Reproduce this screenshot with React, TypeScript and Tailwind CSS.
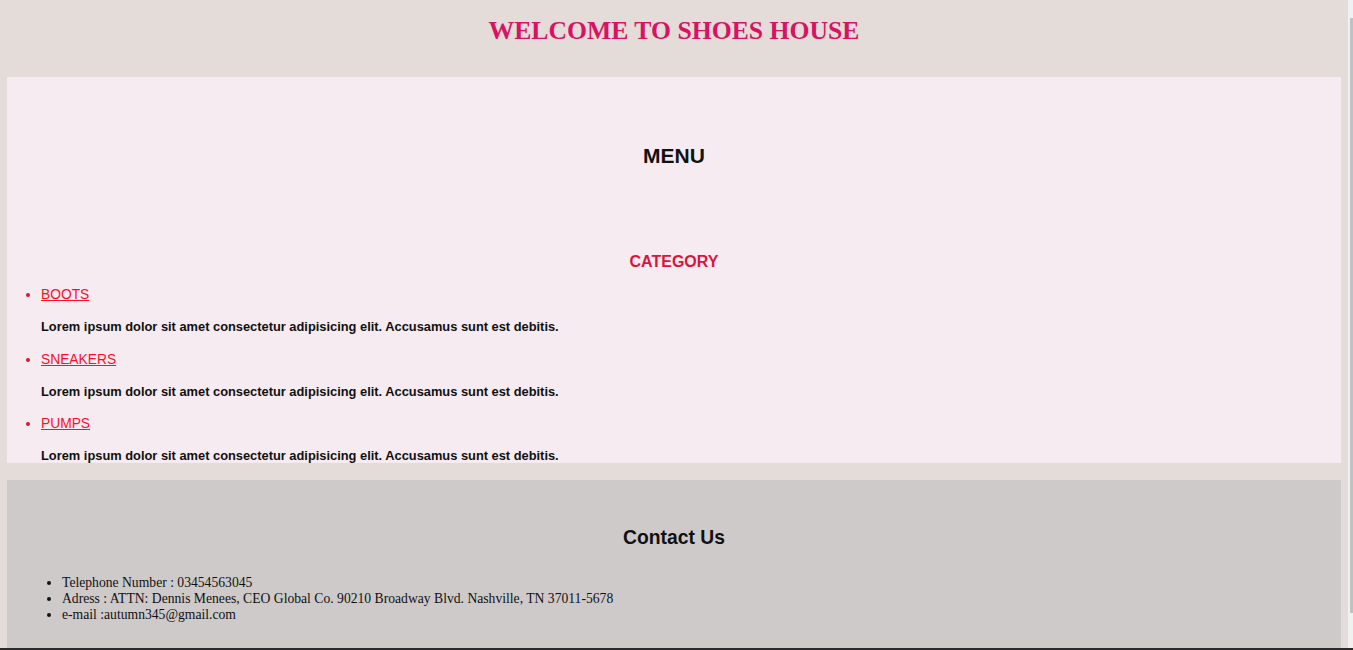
import React from "react";

const categories = ["BOOTS", "SNEAKERS", "PUMPS"];
const lorem =
  "Lorem ipsum dolor sit amet consectetur adipisicing elit. Accusamus sunt est debitis.";

export default function App() {
  return (
    <div className="flex h-[650px] w-full flex-col overflow-hidden bg-[#e4dcd9]">
      <div className="flex h-[648px] w-full">
        {/* page */}
        <div className="flex flex-1 flex-col overflow-hidden">
          <header className="h-[77px] shrink-0 pt-[16px] text-center">
            <h1 className="font-['Liberation_Serif',serif] text-[25.7px] font-bold leading-[30px] text-[#da1262]">
              WELCOME TO SHOES HOUSE
            </h1>
          </header>

          <section className="mx-[7px] h-[386px] shrink-0 overflow-hidden bg-[#f5ebf0] font-['Liberation_Sans',Arial,sans-serif]">
            <h2 className="mt-[67px] text-center text-[21px] font-bold leading-[24px] text-[#111]">MENU</h2>
            <h3 className="mt-[84px] text-center text-[16px] font-bold leading-[20px] text-[#dc143c]">CATEGORY</h3>
            <ul className="mt-[13px] list-disc pl-[34px] text-[#dc143c]">
              {categories.map((c) => (
                <li key={c} className="text-[13.8px] leading-[20px]">
                  <a href="#" className="text-[#fb0f2a] underline">
                    {c}
                  </a>
                  <p className="mt-[14px] mb-[14.5px] text-[12.85px] font-bold leading-[16px] text-[#111]">{lorem}</p>
                </li>
              ))}
            </ul>
          </section>

          <footer className="mx-[7px] mt-[17px] flex-1 bg-[#cecac9] pt-[46px]">
            <h2 className="text-center font-['Liberation_Sans',Arial,sans-serif] text-[19.3px] font-bold leading-[24px] text-[#111]">
              Contact Us
            </h2>
            <ul className="mt-[25px] list-disc pl-[55px] font-['Liberation_Serif',serif] text-[13.65px] leading-[16px] text-[#111]">
              <li>Telephone Number : 03454563045</li>
              <li>Adress : ATTN: Dennis Menees, CEO Global Co. 90210 Broadway Blvd. Nashville, TN 37011-5678</li>
              <li>e-mail :autumn345@gmail.com</li>
            </ul>
          </footer>
        </div>

        {/* scrollbar */}
        <div className="flex w-[5px] shrink-0 bg-[#f1f1f1] pl-[2px] pt-[18px] pb-[35px]">
          <div className="w-full flex-1 bg-[#c1c1c1]" />
        </div>
      </div>
      <div className="h-[2px] w-full bg-[#2b2b2b]" />
    </div>
  );
}
